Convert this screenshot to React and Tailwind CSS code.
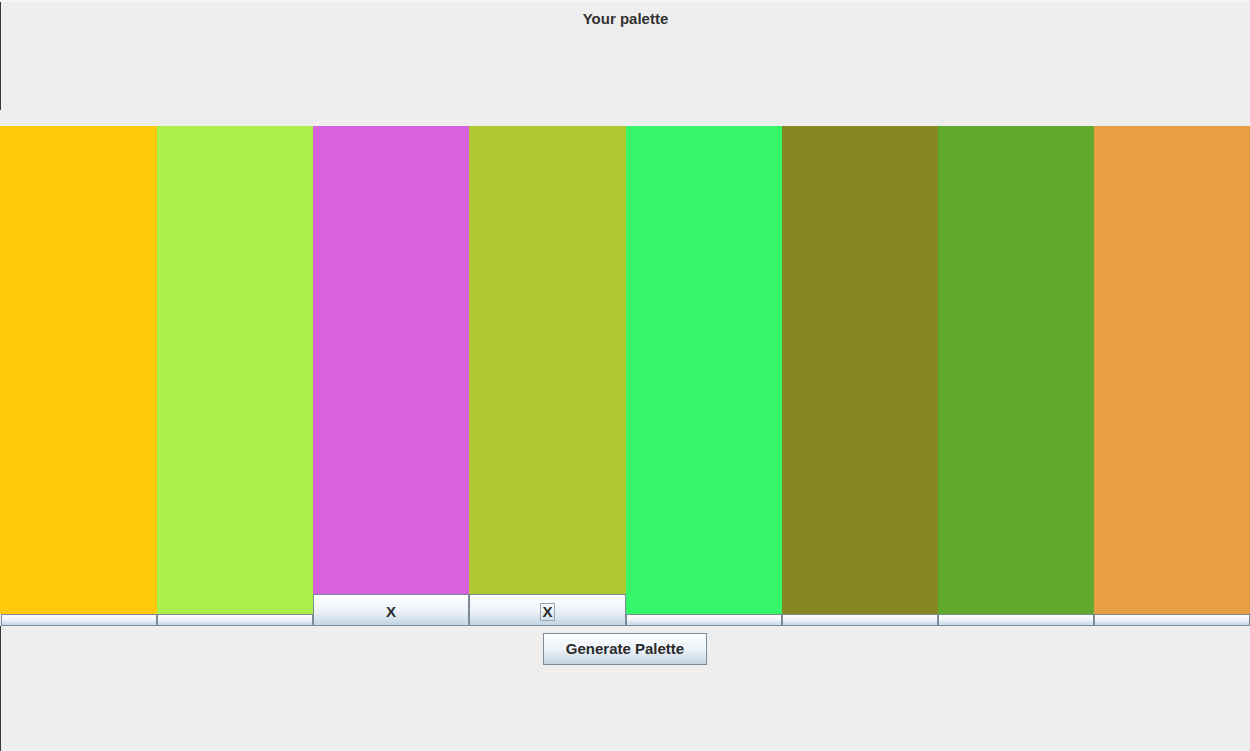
import React, { useState } from "react";

const initialColors = [
  { hex: "#ffc80b", locked: false, w: "w-[157px]" },
  { hex: "#abef4b", locked: false, w: "w-[156px]" },
  { hex: "#d862dc", locked: true, w: "w-[156px]" },
  { hex: "#b0c933", locked: true, w: "w-[157px]" },
  { hex: "#36f66a", locked: false, w: "w-[156px]" },
  { hex: "#868822", locked: false, w: "w-[156px]" },
  { hex: "#61a92f", locked: false, w: "w-[156px]" },
  { hex: "#e89f44", locked: false, w: "w-[156px]" },
];

const btn =
  "border border-[#7a8a99] bg-gradient-to-b from-[#ffffff] via-[#eef3f8] to-[#c5d5e5] text-[#2b2b2b] font-bold";

const App = () => {
  const [colors, setColors] = useState(initialColors);

  const toggle = (i) =>
    setColors(colors.map((c, j) => (j === i ? { ...c, locked: !c.locked } : c)));

  return (
    <div
      className="flex h-[751px] w-[1250px] flex-col overflow-hidden bg-[#eeeeee] border-t-2 border-[#f6f6f6]"
      style={{ fontFamily: '"Liberation Sans", Arial, sans-serif' }}
    >
      {/* header */}
      <div className="flex h-[108px] justify-center border-l border-[#3a3a3a]">
        <p className="mt-[8px] text-[15px] leading-[18px] font-bold text-[#333333]">
          Your palette
        </p>
      </div>
      <div className="h-[16px]" />

      {/* swatches */}
      <div className="flex h-[500px]">
        {colors.map((c, i) => (
          <div key={i} className={`flex flex-col ${c.w}`}>
            <div className="flex-1" style={{ backgroundColor: c.hex }} />
            <button
              type="button"
              onClick={() => toggle(i)}
              className={`${btn} flex items-center justify-center text-[15px] ${
                c.locked ? "h-[32px]" : "h-[12px]"
              } ${i === 0 ? "ml-[1px]" : ""}`}
            >
              {c.locked && (
                <span
                  className={`mt-[3px] px-[1px] leading-[16px] ${
                    i === 3 ? "outline outline-1 outline-[#9aa8b6]" : ""
                  }`}
                >
                  X
                </span>
              )}
            </button>
          </div>
        ))}
      </div>

      <div className="flex flex-1 justify-center border-l border-[#3a3a3a] pt-[7px] pr-[1px]">
        <button type="button" className={`${btn} h-[32px] w-[164px] text-[15px]`}>
          Generate Palette
        </button>
      </div>
    </div>
  );
};

export default App;
